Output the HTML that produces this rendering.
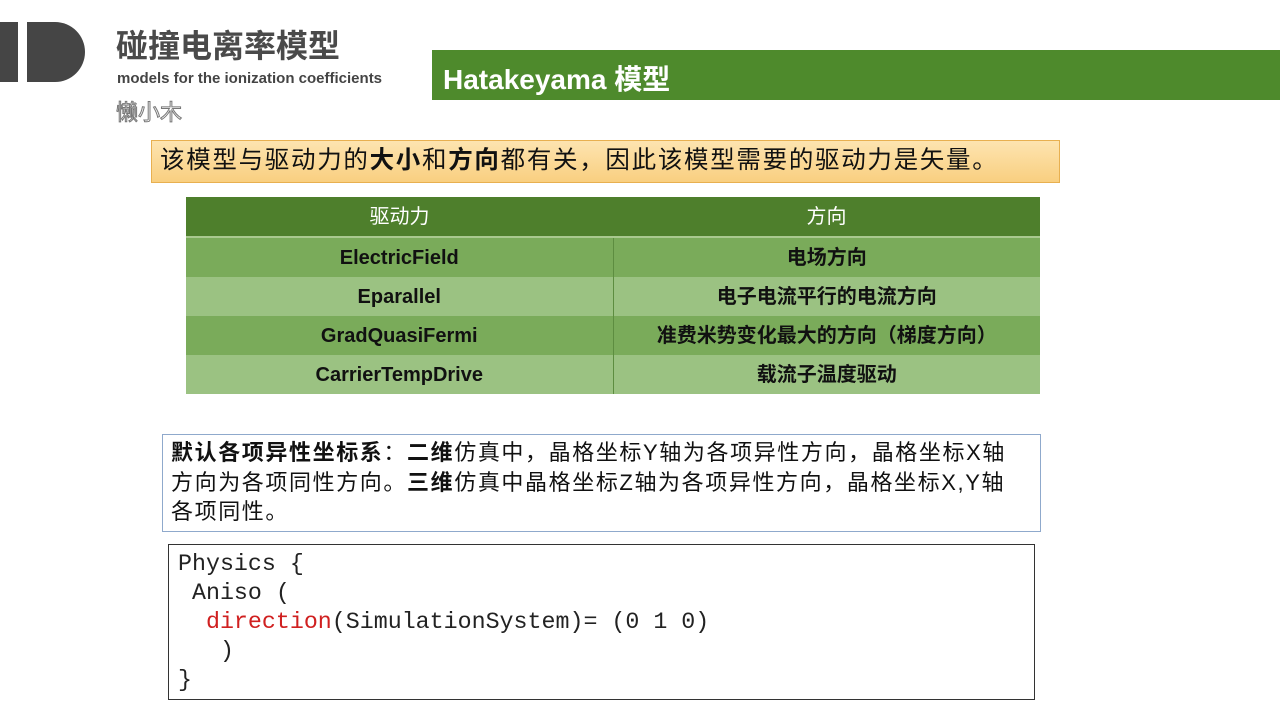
<!DOCTYPE html>
<html><head><meta charset="utf-8"><style>
body{margin:0;width:1280px;height:720px;background:#fff;position:relative;overflow:hidden;font-family:"Liberation Sans","Noto Sans CJK SC",sans-serif;}
.a{position:absolute;}
table{border-collapse:collapse;}
td{text-align:center;font-weight:bold;font-size:20px;color:#111;height:39px;line-height:39px;padding:0;vertical-align:middle;}
td span{display:inline-block;line-height:24px;vertical-align:middle;}
</style></head><body>
<div class="a" style="left:0;top:22px;width:18px;height:60px;background:#454545"></div>
<div class="a" style="left:27px;top:22px;width:58px;height:60px;background:#454545;border-radius:0 30px 30px 0"></div>
<div class="a" style="left:116px;top:26px;font-size:32px;font-weight:bold;color:#4a4a4a;line-height:40px">碰撞电离率模型</div>
<div class="a" style="left:117px;top:70px;font-size:15px;font-weight:bold;color:#444">models for the ionization coefficients</div>
<div class="a" style="left:116px;top:95px;font-size:22px;color:#fff;-webkit-text-stroke:1px #777">懒小木</div>
<div class="a" style="left:432px;top:50px;width:848px;height:50px;background:#4e8a2c"></div>
<div class="a" style="left:443px;top:58px;font-size:28px;font-weight:bold;color:#fff">Hatakeyama 模型</div>
<div class="a" style="left:151px;top:140px;width:907px;height:41px;background:linear-gradient(#fde4b0,#f9cf80);border:1px solid #e8b050"></div>
<div class="a" style="left:160px;top:143px;font-size:24.5px;line-height:36px;color:#111;white-space:nowrap;letter-spacing:1.7px">该模型与驱动力的<b>大小</b>和<b>方向</b>都有关，因此该模型需要的驱动力是矢量。</div>
<table class="a" style="left:186px;top:197px;width:854px">
<tr style="background:#4e7f2c"><td style="color:#fff;font-weight:normal;width:427px;height:38px;line-height:38px;border-bottom:2px solid #a9c98f"><span>驱动力</span></td><td style="color:#fff;font-weight:normal;border-bottom:2px solid #a9c98f"><span>方向</span></td></tr>
<tr style="background:#7aab5a"><td style="border-right:1px solid #5d8d40"><span>ElectricField</span></td><td><span>电场方向</span></td></tr>
<tr style="background:#9bc282"><td style="border-right:1px solid #5d8d40"><span>Eparallel</span></td><td><span>电子电流平行的电流方向</span></td></tr>
<tr style="background:#7aab5a"><td style="border-right:1px solid #5d8d40"><span>GradQuasiFermi</span></td><td><span>准费米势变化最大的方向（梯度方向）</span></td></tr>
<tr style="background:#9bc282"><td style="border-right:1px solid #5d8d40"><span>CarrierTempDrive</span></td><td><span>载流子温度驱动</span></td></tr>
</table>
<div class="a" style="left:162px;top:434px;width:877px;height:96px;border:1px solid #8fa9cc"></div>
<div class="a" style="left:171px;top:438px;font-size:22px;line-height:29.5px;color:#111;white-space:nowrap;letter-spacing:1.6px"><b>默认各项异性坐标系</b>：<b>二维</b>仿真中，晶格坐标Y轴为各项异性方向，晶格坐标X轴<br>方向为各项同性方向。<b>三维</b>仿真中晶格坐标Z轴为各项异性方向，晶格坐标X,Y轴<br>各项同性。</div>
<div class="a" style="left:168px;top:544px;width:865px;height:154px;border:1px solid #333"></div>
<pre class="a" style="left:178px;top:550px;margin:0;font-family:'Liberation Mono',monospace;font-size:23.3px;line-height:29px;color:#222">Physics {
 Aniso (
  <span style="color:#d02020">direction</span>(SimulationSystem)= (0 1 0)
   )
}</pre>
</body></html>
